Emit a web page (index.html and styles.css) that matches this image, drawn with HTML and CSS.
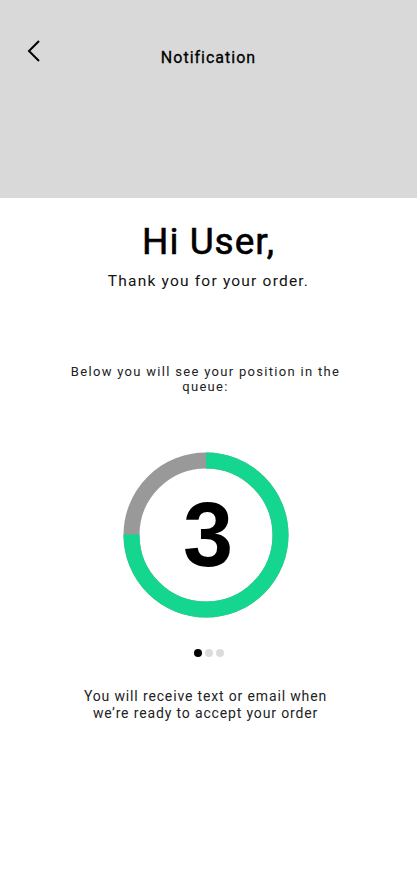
FILE: index.html
```html
<!DOCTYPE html>
<html lang="en">
<head>
<meta charset="utf-8">
<title>Notification</title>
<link rel="stylesheet" href="styles.css">
</head>
<body>
<header class="topbar">
  <div class="topbar-row">
    <button class="back" aria-label="Back">
      <svg width="14" height="22" viewBox="0 0 14 22"><path d="M12 1 L2 11 L12 21" fill="none" stroke="#000" stroke-width="2"/></svg>
    </button>
    <h1 class="title">Notification</h1>
    <span></span>
  </div>
</header>
<main class="content">
  <h2 class="greet">Hi User,</h2>
  <p class="thanks">Thank you for your order.</p>
  <p class="below">Below you will see your position in the queue:</p>
  <div class="ring">
    <svg width="166" height="166" viewBox="0 0 166 166">
      <circle cx="83" cy="83" r="74.5" fill="none" stroke="#999999" stroke-width="16"/>
      <circle cx="83" cy="83" r="74.5" fill="none" stroke="#14d68e" stroke-width="16" stroke-dasharray="351.1 468.1" transform="rotate(-90 83 83)"/>
    </svg>
    <span class="pos">3</span>
  </div>
  <div class="dots"><span class="dot on"></span><span class="dot"></span><span class="dot"></span></div>
  <p class="note">You will receive text or email when we’re ready to accept your order</p>
</main>
</body>
</html>
```
FILE: styles.css
```css
* { box-sizing: border-box; }
html, body { margin: 0; padding: 0; background: #fff; }
body { font-family: Roboto, "Noto Sans", sans-serif; color: #111; width: 417px; }
.topbar { background: #d9d9d9; height: 198px; padding-top: 40px; }
.topbar-row { display: grid; grid-template-columns: 1fr auto 1fr; align-items: start; }
.back { background: none; border: 0; padding: 0; margin-left: 26px; width: 16px; height: 24px; justify-self: start; cursor: pointer; }
.title { margin: 8px 0 0; font-size: 16px; font-weight: 400; letter-spacing: 1px; color: #000; line-height: 20px; -webkit-text-stroke: 0.3px #000; }
.content { display: flex; flex-direction: column; align-items: center; text-align: center; }
.greet { margin: 24px 0 0; font-size: 37px; font-weight: 400; letter-spacing: 1px; line-height: 40px; color: #000; -webkit-text-stroke: 0.6px #000; }
.thanks { margin: 9px 0 0; font-size: 15.5px; letter-spacing: 1.2px; line-height: 20px; color: #111; }
.below { margin: 73px 6px 0 0; width: 300px; font-size: 13px; letter-spacing: 1.3px; line-height: 15px; color: #222; }
.ring { position: relative; margin: 58px 6px 0 0; width: 166px; height: 166px; }
.ring svg { display: block; }
.pos { position: absolute; inset: 0; display: flex; align-items: center; justify-content: center; font-family: "Liberation Sans", Arial, sans-serif; font-weight: 700; font-size: 90px; color: #000; padding-left: 5px; }
.dots { display: flex; gap: 3px; margin-top: 31px; }
.dot { width: 8px; height: 8px; border-radius: 50%; background: #dcdcdc; }
.dot.on { background: #000; }
.note { margin: 31px 6px 0 0; width: 270px; font-size: 14px; letter-spacing: 0.85px; line-height: 17px; color: #222; }
```
